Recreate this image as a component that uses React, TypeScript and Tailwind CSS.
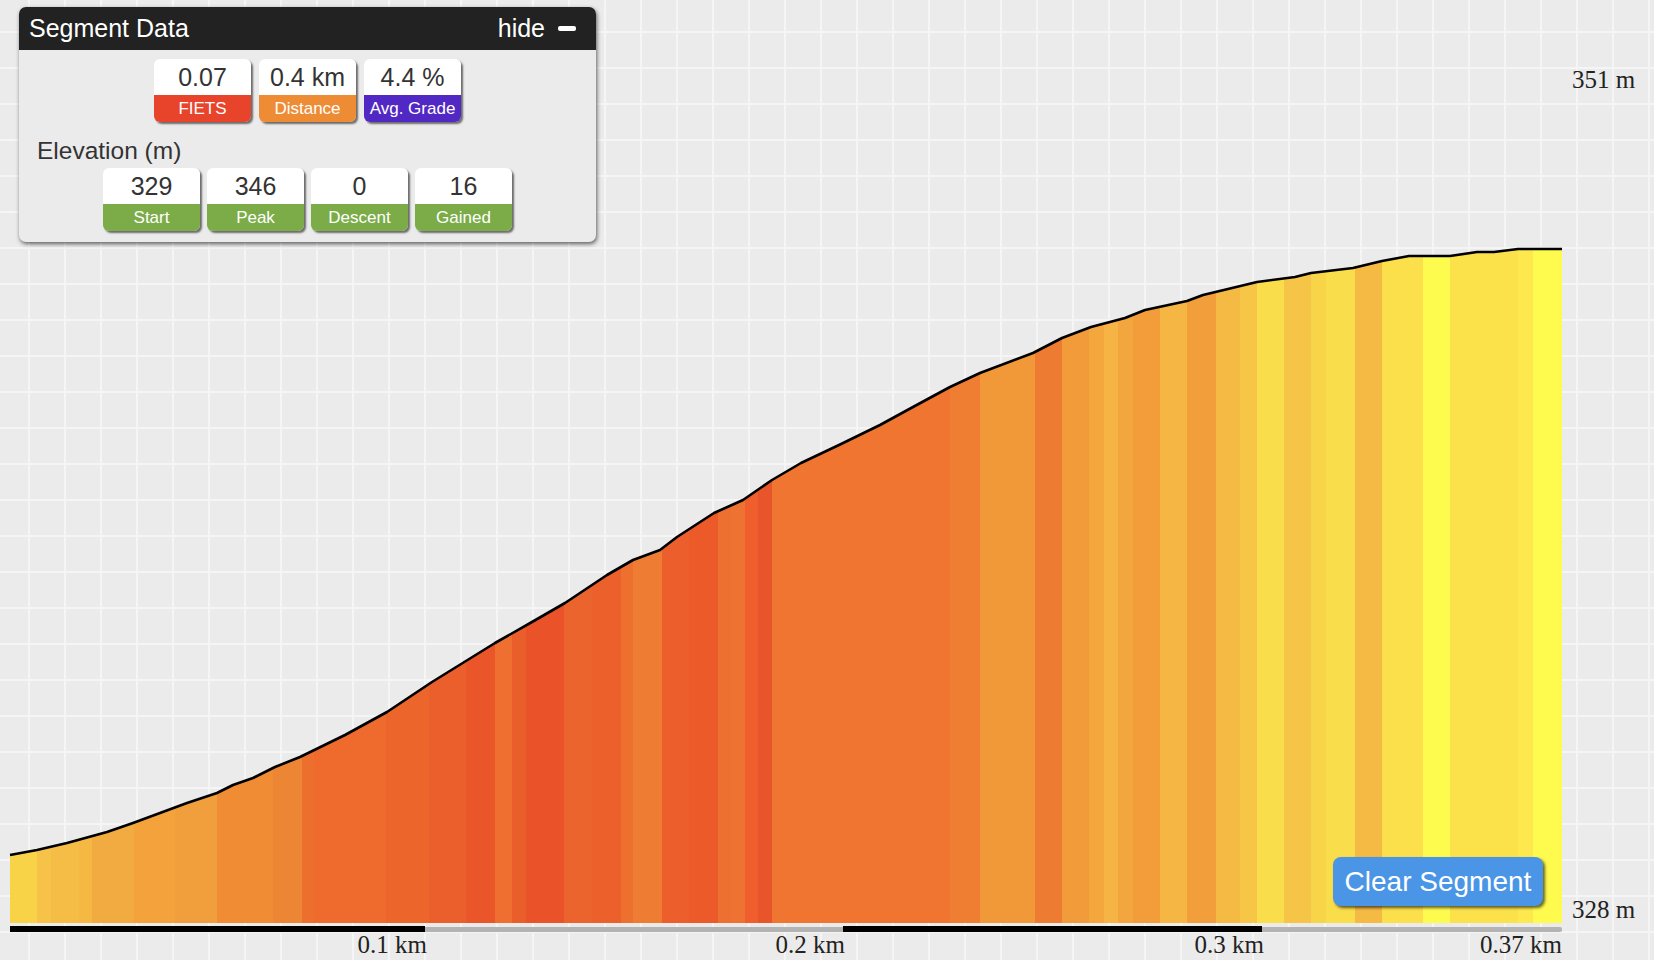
const PROFILE: [number, number][] = [
  [10, 855], [37, 850], [67, 843], [107, 832], [133, 823], [160, 813], [187, 803],
  [217, 793], [233, 785], [253, 778], [275, 767], [300, 757], [345, 735], [387, 712],
  [432, 682], [495, 643], [532, 622], [565, 603], [607, 575], [633, 560], [660, 550],
  [677, 537], [714, 513], [743, 500], [772, 480], [801, 463], [839, 445], [880, 425],
  [913, 407], [950, 387], [980, 373], [1033, 353], [1062, 338], [1091, 327],
  [1125, 318], [1145, 310], [1187, 301], [1203, 295], [1257, 282], [1295, 277],
  [1311, 273], [1353, 268], [1382, 261], [1409, 256], [1450, 256], [1477, 252],
  [1494, 252], [1518, 249], [1562, 249],
]

// grade bands: start x + colour, last entry closes the chart
const BANDS: [number, string][] = [
  [10, '#f8d348'], [37, '#f6c247'], [51, '#f5bd45'], [79, '#f4b843'], [92, '#f2ab40'],
  [134, '#f3a23c'], [175, '#f19f3c'], [217, '#ef8c34'], [273, '#ec8634'], [302, '#ed6f2e'],
  [314, '#ee6b2d'], [386, '#ec662c'], [429, '#eb5f2c'], [466, '#ea552a'], [495, '#ee6f2f'],
  [512, '#ea5e2b'], [526, '#ea5329'], [564, '#ec642d'], [592, '#ec602c'], [621, '#ee702f'],
  [633, '#ee7d33'], [662, '#ec5f2c'], [689, '#ec5a2a'], [718, '#ee7030'], [731, '#ee7231'],
  [745, '#ef5e2c'], [758, '#e9552a'], [772, '#ef7530'], [950, '#ef7d32'], [980, '#f19838'],
  [1035, '#ed7b32'], [1062, '#f29b3a'], [1089, '#f3a73d'], [1104, '#f5b443'], [1118, '#f3a63d'],
  [1133, '#f29d3a'], [1160, '#f5b644'], [1187, '#f29e3b'], [1216, '#f5ba44'], [1240, '#f7c646'],
  [1257, '#f9dd4a'], [1284, '#f6c547'], [1311, '#f8d448'], [1326, '#fadd4a'], [1355, '#f5ba44'],
  [1382, '#fbe04b'], [1423, '#fefb4f'], [1450, '#fbe24b'], [1518, '#fde84d'], [1533, '#fefa4e'],
  [1562, ''],
]

const BOTTOM = 923

const Tile = ({ value, label, color }: { value: string; label: string; color: string }) => (
  <div className="w-[97px] overflow-hidden rounded-[6px] shadow-[2px_2px_2px_rgba(0,0,0,0.55)]">
    <div className="flex h-[36px] items-center justify-center bg-white text-[25px] leading-none text-[#333]">
      {value}
    </div>
    <div className={`flex h-[27px] items-center justify-center text-[17px] leading-none text-white ${color}`}>
      {label}
    </div>
  </div>
)

const ElevationChart = () => {
  const line = PROFILE.map(([x, y], i) => `${i ? 'L' : 'M'}${x},${y}`).join(' ')
  const area = `${line} L1562,${BOTTOM} L10,${BOTTOM} Z`

  return (
    <svg width={1654} height={960} className="block">
      <defs>
        <clipPath id="profile-area">
          <path d={area} />
        </clipPath>
      </defs>
      <g clipPath="url(#profile-area)">
        {BANDS.slice(0, -1).map(([x, color], i) => (
          <rect key={x} x={x} y={200} width={BANDS[i + 1][0] - x + 0.5} height={BOTTOM - 200} fill={color} />
        ))}
      </g>
      <path d={line} fill="none" stroke="#000" strokeWidth={2.6} strokeLinejoin="round" />

      <rect x={10} y={927} width={1552} height={5} rx={2} fill="#b3b3b3" />
      <rect x={10} y={926} width={415} height={6} fill="#000" />
      <rect x={843} y={926} width={419} height={6} fill="#000" />

      <g fontFamily="'Liberation Serif', serif" fontSize={25} fill="#222">
        <text x={427} y={953} textAnchor="end">0.1 km</text>
        <text x={845} y={953} textAnchor="end">0.2 km</text>
        <text x={1264} y={953} textAnchor="end">0.3 km</text>
        <text x={1562} y={953} textAnchor="end">0.37 km</text>
        <text x={1572} y={88}>351 m</text>
        <text x={1572} y={918}>328 m</text>
      </g>
    </svg>
  )
}

export default function App() {
  return (
    <div className="relative h-[960px] w-full overflow-hidden bg-[#ebebeb] bg-[linear-gradient(to_right,#f5f5f5_2px,transparent_2px),linear-gradient(to_bottom,#f5f5f5_2px,transparent_2px)] bg-[size:36px_36px] bg-[position:28px_31px] font-['Liberation_Sans',Arial,sans-serif]">
      <ElevationChart />

      <div className="absolute left-[19px] top-[7px] w-[577px] overflow-hidden rounded-[7px] bg-[#ebebeb] pb-[11px] shadow-[1px_2px_4px_rgba(0,0,0,0.6)]">
        <div className="flex h-[43px] items-center justify-between bg-[#222] pl-[10px] pr-[20px] text-white">
          <span className="text-[25px] leading-none">Segment Data</span>
          <div className="flex items-center gap-[13px]">
            <span className="text-[25px] leading-none">hide</span>
            <span className="h-[5px] w-[18px] rounded-[2px] bg-white" />
          </div>
        </div>

        <div className="mt-[9px] flex justify-center gap-[8px]">
          <Tile value="0.07" label="FIETS" color="bg-[#e8442c]" />
          <Tile value="0.4 km" label="Distance" color="bg-[#ee8c35]" />
          <Tile value="4.4 %" label="Avg. Grade" color="bg-[#5128c4]" />
        </div>

        <p className="mt-[17px] pl-[18px] text-[24.5px] leading-[24px] text-[#333]">Elevation (m)</p>

        <div className="mt-[5px] flex justify-center gap-[7px]">
          <Tile value="329" label="Start" color="bg-[#7bac47]" />
          <Tile value="346" label="Peak" color="bg-[#7bac47]" />
          <Tile value="0" label="Descent" color="bg-[#7bac47]" />
          <Tile value="16" label="Gained" color="bg-[#7bac47]" />
        </div>
      </div>

      <button
        type="button"
        className="absolute bottom-[54px] right-[111px] flex h-[49px] w-[210px] items-center justify-center rounded-[8px] bg-[#4a95e6] text-[28px] leading-none text-white shadow-[2px_2px_3px_rgba(0,0,0,0.6)]"
      >
        Clear Segment
      </button>
    </div>
  )
}
